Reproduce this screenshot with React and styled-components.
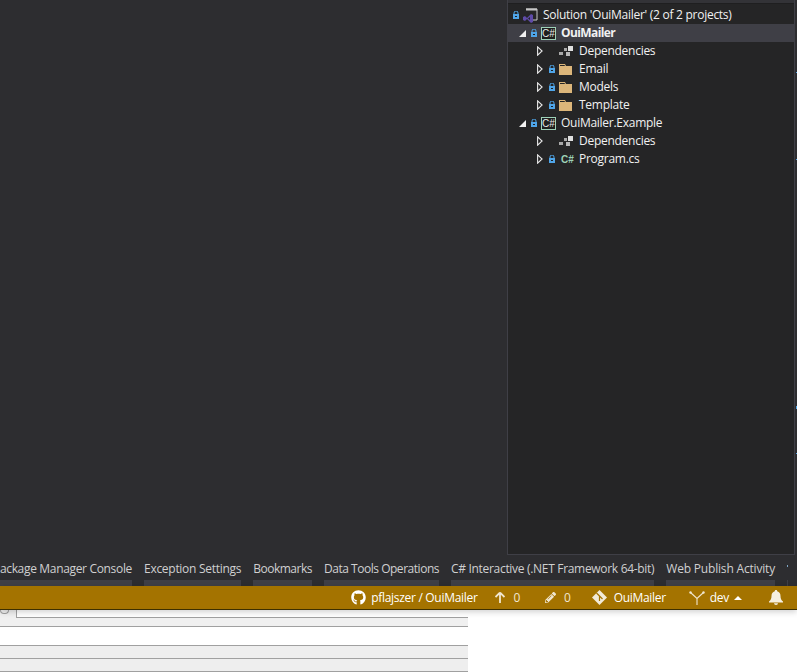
import React from "react";
import styled, { createGlobalStyle } from "styled-components";
import { FaGithub, FaPencilAlt } from "react-icons/fa";

const Global = createGlobalStyle`
  html, body { margin: 0; padding: 0; background: #fff; }
  #root { width: 797px; height: 672px; overflow: hidden; }
  * { box-sizing: border-box; }
`;

const Page = styled.div`
  width: 797px;
  height: 672px;
  display: flex;
  flex-direction: column;
  overflow: hidden;
  font-family: "Open Sans", "Noto Sans", sans-serif;
  font-size: 12px;
  background: #fff;
`;

const Workspace = styled.div`
  height: 554px;
  flex: none;
  display: flex;
  justify-content: flex-end;
  background: #2d2d30;
  padding-right: 2px;
  position: relative;
`;

const Explorer = styled.section`
  width: 288px;
  height: 555px;
  background: #252526;
  border: 1px solid #3f3f46;
  border-top: none;
  display: flex;
  flex-direction: column;
  color: #f1f1f1;
  letter-spacing: -0.27px;
`;

const Tick = styled.i`
  position: absolute;
  right: 0;
  top: ${(p) => p.$y}px;
  width: 1px;
  height: ${(p) => p.$h || 1}px;
  background: #4fa5e8;
`;

const PanelStrip = styled.div`
  height: 4px;
  flex: none;
  background: #333337;
  border-bottom: 1px solid #1f1f20;
  margin-bottom: 2px;
`;

const Row = styled.div`
  height: 18px;
  flex: none;
  display: flex;
  align-items: center;
  padding-left: ${(p) => p.$indent}px;
  background: ${(p) => (p.$selected ? "#3f3f46" : "transparent")};
  font-weight: ${(p) => (p.$selected ? 700 : 400)};
  letter-spacing: ${(p) => (p.$selected ? "-0.6px" : "inherit")};
  white-space: nowrap;
`;

const Label = styled.span`
  display: block;
  height: 18px;
  line-height: 17px;
`;

const ArrowSlot = styled.span`
  width: 12px;
  height: 18px;
  flex: none;
  display: flex;
  align-items: center;
`;

const LockSlot = styled.span`
  width: 10px;
  height: 18px;
  flex: none;
  display: flex;
  align-items: center;
`;

const IconSlot = styled.span`
  width: 20px;
  height: 18px;
  flex: none;
  display: flex;
  align-items: center;
`;

const ProjectBox = styled.span`
  width: 15px;
  height: 13px;
  flex: none;
  border: 1px solid #9ed2b8;
  background: #1e1e1e;
  color: #e8e8e8;
  font-family: "Liberation Sans", sans-serif;
  font-size: 10px;
  letter-spacing: 0;
  line-height: 11px;
  font-weight: 400;
  text-align: center;
`;

const FileGlyph = styled.span`
  color: #9ed2b8;
  margin-left: 2px;
  font-family: "Liberation Sans", sans-serif;
  font-size: 10px;
  letter-spacing: 0;
  font-weight: 700;
`;

const Gutter = styled.div`
  height: 32px;
  flex: none;
  background: #2d2d30;
  overflow: hidden;
`;

const TabStrip = styled.div`
  display: flex;
  gap: 12px;
  margin-top: 6px;
  margin-left: -7px;
  height: 26px;
`;

const Tab = styled.div`
  flex: none;
  height: 26px;
  color: #d0d0d0;
  line-height: 18px;
  letter-spacing: ${(p) => p.$track}px;
  white-space: nowrap;
  border-bottom: 6px solid #3f3f46;
`;

const TabSliver = styled.div`
  flex: none;
  width: 1px;
  height: 26px;
  border-bottom: 6px solid #3f3f46;
  position: relative;
  &::before {
    content: "";
    position: absolute;
    left: 0;
    top: 5px;
    width: 1px;
    height: 2px;
    background: #7fa6c4;
  }
`;

const StatusBar = styled.footer`
  height: 24px;
  flex: none;
  background: #a47300;
  border-bottom: 1px solid #3d3000;
  color: #fff;
  display: flex;
  align-items: center;
  justify-content: flex-end;
  padding-right: 14px;
  letter-spacing: -0.3px;
  box-shadow: 0 2px 6px rgba(0, 0, 0, 0.18);
  position: relative;
  z-index: 1;
`;

const StatusItem = styled.span`
  display: flex;
  align-items: center;
  gap: ${(p) => p.$gap || 5}px;
  margin-left: ${(p) => p.$ml || 0}px;
  white-space: nowrap;
  color: ${(p) => (p.$dim ? "#f0e6cf" : "#fff")};
`;

const Lower = styled.div`
  width: 468px;
  flex: 1;
  display: flex;
  flex-direction: column;
`;

const FormRow = styled.div`
  height: 17px;
  flex: none;
  display: flex;
  align-items: flex-start;
  background: #f0f0f0;
  border-bottom: 1px solid #a0a0a0;
`;

const Knob = styled.span`
  width: 9px;
  height: 4px;
  flex: none;
  margin-right: 7px;
  border: 1px solid #a0a0a0;
  border-top: none;
  border-radius: 0 0 5px 5px;
`;

const FormInput = styled.div`
  flex: 1;
  height: 8px;
  background: #fff;
  border: 1px solid #a0a0a0;
  border-top: none;
  border-right: none;
`;

const BlankRow = styled.div`
  height: 19px;
  flex: none;
  background: #fff;
  border-bottom: 1px solid #a0a0a0;
`;

const GreyRow = styled.div`
  height: 13px;
  flex: none;
  background: #eee;
  border-bottom: 1px solid #a0a0a0;
`;

const Lock = () => (
  <svg width="6" height="8" viewBox="0 0 6 8">
    <path d="M1 3.500V2a2 2 0 0 1 4 0v1.500" fill="none" stroke="#4fa5e8" strokeWidth="1" />
    <rect x="0" y="3" width="6" height="5" fill="#4fa5e8" />
    <rect x="2" y="5" width="2" height="1" fill="#1e1e1e" />
  </svg>
);

const Open = () => (
  <svg width="7" height="7" viewBox="0 0 7 7">
    <path d="M7 0v7H0z" fill="#f1f1f1" />
  </svg>
);

const Closed = () => (
  <svg width="6" height="10" viewBox="0 0 6 10">
    <path d="M.6.800L5.100 5 .6 9.200z" fill="none" stroke="#e8e8e8" strokeWidth="1.100" />
  </svg>
);

const Folder = () => (
  <svg width="13" height="11" viewBox="0 0 13 11">
    <path d="M0 0h6l1 2h6v9H0z" fill="#dcb67a" />
    <path d="M1 1h4.500l.5 1H1z" fill="#252526" />
  </svg>
);

const Deps = () => (
  <svg width="14" height="10" viewBox="0 0 14 10">
    <rect x="0" y="6" width="4" height="3" fill="#a8a8a8" />
    <rect x="5" y="2" width="3" height="3" fill="#a8a8a8" />
    <rect x="7" y="6" width="4" height="4" fill="#b8b8b8" />
    <rect x="9" y="0" width="5" height="5" fill="#e0e0e0" />
  </svg>
);

const Solution = () => (
  <svg width="15" height="16" viewBox="0 0 15 16">
    <path d="M3 2h11v11H8" fill="none" stroke="#c8c8c8" strokeWidth="1" />
    <rect x="3" y="1.500" width="11" height="2" fill="#c8c8c8" />
    <path d="M0 10l2-1 2 2 4-4 2 1v7l-2 1-4-4-2 2-2-1z" fill="#5f4ba8" />
    <path d="M7 10v3l-2-1.500z" fill="#252526" />
  </svg>
);

const ArrowUp = () => (
  <svg width="10" height="11" viewBox="0 0 10 11">
    <path d="M5 .5L9.500 5M5 .5L.5 5M5 .5V11" fill="none" stroke="#f0e6cf" strokeWidth="1.800" />
  </svg>
);

const GitDiamond = () => (
  <svg width="15" height="15" viewBox="0 0 15 15">
    <path d="M7.500 0L15 7.500 7.500 15 0 7.500z" fill="#f2ead8" />
    <path d="M4.500 3l3 3M7.500 6v5M7.500 6l3 3" fill="none" stroke="#a47300" strokeWidth="1.200" />
  </svg>
);

const Branch = () => (
  <svg width="16" height="14" viewBox="0 0 16 14">
    <path d="M1.500 1.500L8 7.500l6.500-6M8 7.500V14" fill="none" stroke="#f0e6cf" strokeWidth="1.100" />
    <circle cx="1.500" cy="1.500" r="1.200" fill="#f0e6cf" />
    <circle cx="14.500" cy="1.500" r="1.200" fill="#f0e6cf" />
  </svg>
);

const Caret = () => (
  <svg width="8" height="4" viewBox="0 0 8 4">
    <path d="M4 0l4 4H0z" fill="#fff" />
  </svg>
);

const Bell = () => (
  <svg width="14" height="15" viewBox="0 0 14 15">
    <path d="M7 0c.8 0 1.200.5 1.200 1.200C10.400 1.800 11.500 3.500 11.500 6c0 2.500.8 4.200 2.500 5.500v1H0v-1C1.700 10.200 2.500 8.500 2.500 6c0-2.500 1.100-4.200 3.300-4.800C5.800.5 6.200 0 7 0z" fill="#f5efe0" />
    <path d="M5 13.300h4a2 1.700 0 0 1-4 0z" fill="#f5efe0" />
  </svg>
);

const tree = [
  { indent: 5, lock: true, icon: <Solution />, label: "Solution 'OuiMailer' (2 of 2 projects)" },
  { indent: 11, open: true, lock: true, icon: <ProjectBox>C#</ProjectBox>, label: "OuiMailer", selected: true },
  { indent: 29, closed: true, icon: <Deps />, label: "Dependencies" },
  { indent: 29, closed: true, lock: true, icon: <Folder />, label: "Email" },
  { indent: 29, closed: true, lock: true, icon: <Folder />, label: "Models" },
  { indent: 29, closed: true, lock: true, icon: <Folder />, label: "Template" },
  { indent: 11, open: true, lock: true, icon: <ProjectBox>C#</ProjectBox>, label: "OuiMailer.Example" },
  { indent: 29, closed: true, icon: <Deps />, label: "Dependencies" },
  { indent: 29, closed: true, lock: true, icon: <FileGlyph>C#</FileGlyph>, label: "Program.cs" },
];

const tabs = [
  { label: "Package Manager Console", track: -0.33 },
  { label: "Exception Settings", track: -0.28 },
  { label: "Bookmarks", track: -0.5 },
  { label: "Data Tools Operations", track: -0.47 },
  { label: "C# Interactive (.NET Framework 64-bit)", track: -0.31 },
  { label: "Web Publish Activity", track: -0.18 },
];

export default function App() {
  return (
    <Page>
      <Global />
      <Workspace>
        <Explorer>
          <PanelStrip />
          {tree.map((n, i) => (
            <Row key={i} $indent={n.indent} $selected={n.selected}>
              {n.open && <ArrowSlot><Open /></ArrowSlot>}
              {n.closed && <ArrowSlot><Closed /></ArrowSlot>}
              <LockSlot>{n.lock && <Lock />}</LockSlot>
              <IconSlot>{n.icon}</IconSlot>
              <Label>{n.label}</Label>
            </Row>
          ))}
        </Explorer>
        <Tick $y={72} />
        <Tick $y={159} />
        <Tick $y={406} $h={3} />
        <Tick $y={453} />
      </Workspace>
      <Gutter>
        <TabStrip>
          {tabs.map((t) => (
            <Tab key={t.label} $track={t.track}>{t.label}</Tab>
          ))}
          <TabSliver />
        </TabStrip>
      </Gutter>
      <StatusBar>
        <StatusItem>
          <FaGithub size={15} />
          pflajszer / OuiMailer
        </StatusItem>
        <StatusItem $ml={17} $gap={9} $dim>
          <ArrowUp />0
        </StatusItem>
        <StatusItem $ml={25} $gap={8} $dim>
          <FaPencilAlt size={11} />0
        </StatusItem>
        <StatusItem $ml={21} $gap={7}>
          <GitDiamond />
          OuiMailer
        </StatusItem>
        <StatusItem $ml={23} $gap={5}>
          <Branch />
          dev
          <Caret />
        </StatusItem>
        <StatusItem $ml={27}>
          <Bell />
        </StatusItem>
      </StatusBar>
      <Lower>
        <FormRow>
          <Knob />
          <FormInput />
        </FormRow>
        <BlankRow />
        <GreyRow />
        <GreyRow />
      </Lower>
    </Page>
  );
}
